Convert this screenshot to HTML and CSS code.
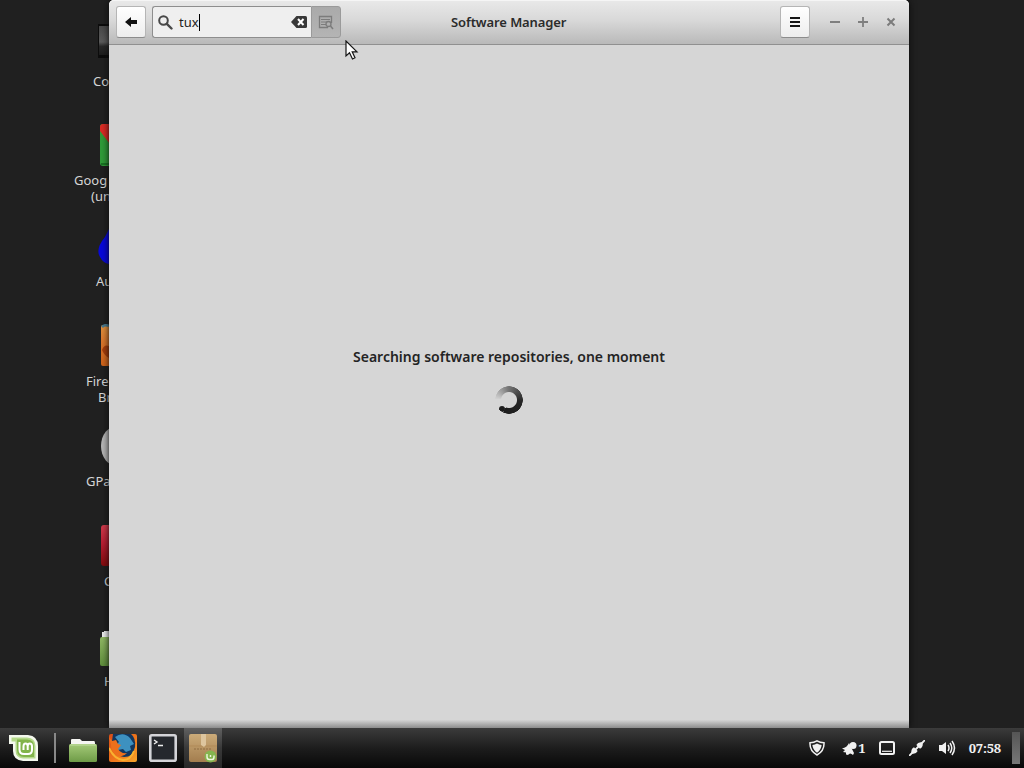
FILE: index.html
```html
<!DOCTYPE html>
<html lang="en">

<head>
  <meta charset="UTF-8">
  <title>Software Manager</title>
  <link rel="stylesheet" href="styles.css">
</head>

<body>
  <div class="desktop">

    <div class="shortcuts">
      <div class="shortcut">
        <svg class="pic" width="11" height="42" viewBox="0 0 11 42"><defs><linearGradient id="gComp" x2="0" y2="1"><stop offset="0" stop-color="#484848"/><stop offset=".55" stop-color="#5b5b5b"/><stop offset=".7" stop-color="#292929"/><stop offset="1" stop-color="#1d1d1d"/></linearGradient></defs><rect x="0" y="0" width="14" height="34" fill="#0c0c0c"/><rect x="1" y="2" width="13" height="29" fill="url(#gComp)"/></svg>
        <span class="computer">Co</span>
      </div>
      <div class="shortcut">
        <svg class="pic chrome" width="9" height="42" viewBox="0 0 9 42"><rect width="20" height="42" rx="3" fill="#2f9a38"/><path d="M0 3Q0 0 3 0H10V20L0 7z" fill="#d92b24"/><path d="M1 40H10" stroke="#187423" stroke-width="2"/></svg>
        <span class="google">Goog</span>
        <span class="unstable">(un</span>
      </div>
      <div class="shortcut">
        <svg class="pic" width="12" height="42" viewBox="0 0 12 42"><path d="M12 5L8 13Q-2 25 3 33Q6 39 12 40z" fill="#0808d8"/></svg>
        <span class="au">Au</span>
      </div>
      <div class="shortcut">
        <svg class="pic" width="8" height="42" viewBox="0 0 8 42"><defs><linearGradient id="gFire" x2="0" y2="1"><stop offset="0" stop-color="#e0913e"/><stop offset=".45" stop-color="#d8742a"/><stop offset="1" stop-color="#ce6219"/></linearGradient></defs><rect y="1" width="18" height="41" rx="2" fill="url(#gFire)"/><path d="M1 3Q4 0 8 2" stroke="#487b91" stroke-width="2.500" fill="none"/><path d="M1 26Q3 20 8 22V34Q3 31 1 26z" fill="#a53e0c"/></svg>
        <span class="fire">Fire</span>
        <span class="browser">Br</span>
      </div>
      <div class="shortcut">
        <svg class="pic" width="8" height="42" viewBox="0 0 8 42"><ellipse cx="16" cy="22" rx="16" ry="20" fill="#b5b5b5"/></svg>
        <span class="gparted">GPa</span>
      </div>
      <div class="shortcut">
        <svg class="pic" width="8" height="42" viewBox="0 0 8 42"><defs><linearGradient id="gRed" x2="0" y2="1"><stop offset="0" stop-color="#d13b4c"/><stop offset=".45" stop-color="#b71d32"/><stop offset="1" stop-color="#820b0d"/></linearGradient></defs><rect y="1" width="18" height="41" rx="3" fill="url(#gRed)"/></svg>
        <span class="letter">C</span>
      </div>
      <div class="shortcut">
        <svg class="pic" width="9" height="42" viewBox="0 0 9 42"><path d="M2 13V8h2V7h5v6z" fill="#ededed"/><defs><linearGradient id="gHome" x2="0" y2="1"><stop offset="0" stop-color="#90b864"/><stop offset="1" stop-color="#5f8d3b"/></linearGradient></defs><rect y="13" width="18" height="29" rx="2" fill="url(#gHome)"/></svg>
        <span class="letter">H</span>
      </div>
    </div>

    <div class="window">
      <div class="header">
        <button class="btn back">
          <svg width="12" height="10" viewBox="0 0 12 10"><path d="M0 5L6 0V3H12V7H6V10z" fill="#111"/></svg>
        </button>
        <div class="search">
          <svg width="15" height="15" viewBox="0 0 15 15"><circle cx="5.500" cy="5.500" r="4.300" fill="none" stroke="#484848" stroke-width="2"/><path d="M8.800 8.800L13.500 13.500" stroke="#484848" stroke-width="2.400" stroke-linecap="round"/></svg>
          <span class="query">tux</span><span class="caret"></span>
          <svg class="clear" width="16" height="12" viewBox="0 0 16 12"><path d="M0 6L5.500 0H14.500Q16 0 16 1.500V10.500Q16 12 14.500 12H5.500z" fill="#383838"/><path d="M7 3L12.500 9M12.500 3L7 9" stroke="#fff" stroke-width="2"/></svg>
        </div>
        <div class="toggle">
          <svg width="16" height="15" viewBox="0 0 16 15"><path d="M10 12.500H1.500V1.500H13.500V8" fill="none" stroke="#7c7c7c" stroke-width="1.300"/><path d="M3 4.500H12M3 7H9M3 9.500H8" stroke="#7c7c7c"/><circle cx="10.500" cy="9" r="2.500" fill="none" stroke="#7c7c7c" stroke-width="1.300"/><path d="M12.500 11L15 14" stroke="#7c7c7c" stroke-width="1.500"/></svg>
        </div>
        <div class="title">Software Manager</div>
        <button class="btn menu">
          <svg width="12" height="10" viewBox="0 0 12 10"><path d="M1 1H11M1 5H11M1 9H11" stroke="#151515" stroke-width="2"/></svg>
        </button>
        <svg class="controls" width="66" height="10" viewBox="0 0 66 10"><path d="M0 5H10M28 5H38M33 0V10" stroke="#7f7f7f" stroke-width="1.800"/><path d="M57.500 1.500L64.500 8.500M64.500 1.500L57.500 8.500" stroke="#7b7b7b" stroke-width="2"/></svg>
      </div>

      <div class="content">
        <p class="message">Searching software repositories, one moment</p>
        <div class="spinner"></div>
      </div>
    </div>

    <svg class="pointer" width="14" height="21" viewBox="0 0 14 21"><path d="M1 1V16L4.500 12.800L7.500 19L10 17.800L7.200 11.800H12z" fill="#fff" stroke="#151515" stroke-width="1.200"/></svg>
  </div>

  <div class="panel">
    <div class="start">
      <svg width="29" height="27" viewBox="0 0 29 27"><path d="M0 0H19Q29 1 29 11V26H14Q4 25 4 16V9H0z" fill="#f4f8ee"/><path d="M2.500 2.500H18Q26.500 3 26.500 11V23.500H14Q6.500 23 6.500 15V6.500H2.500z" fill="#b4d98a"/><path d="M8 4.500H18Q25 4.500 25 11V22H15Q8 22 8 15z" fill="#82b44b"/><path d="M10.500 7V14.500Q10.500 19 15 19H19Q23 19 23 15V11.500Q23 8.500 20.800 8.500Q18.700 8.500 18.700 11.500V15M18.700 11.500Q18.700 8.500 16.600 8.500Q14.500 8.500 14.500 11.500V15" fill="none" stroke="#fff" stroke-width="2"/></svg>
    </div>
    <div class="divider"></div>
    <div class="task">
      <svg class="folder" width="28" height="24" viewBox="0 0 28 24"><defs><linearGradient id="gFolder" x2="0" y2="1"><stop offset="0" stop-color="#a4ca78"/><stop offset="1" stop-color="#6e9b47"/></linearGradient></defs><path d="M2 7V2Q2 1 3 1H11L13 3H25Q26 3 26 5V8z" fill="#f5f5f2"/><rect y="6" width="28" height="18" rx="1.500" fill="url(#gFolder)"/><path d="M1 7H27" stroke="#c1dda1"/></svg>
    </div>
    <div class="task">
      <svg width="28" height="28" viewBox="0 0 28 28"><defs><linearGradient id="gFox" x2="1" y2="1"><stop offset="0" stop-color="#d94c17"/><stop offset=".6" stop-color="#f07a1c"/><stop offset="1" stop-color="#f9a72b"/></linearGradient></defs><rect width="28" height="28" rx="2" fill="url(#gFox)"/><path d="M4 0H22Q27 4 26 13Q24 23 15 23Q8 22 5 16L3 7z" fill="#12375f"/><path d="M6 3Q14-3 21 4L25 10L21 12L22 16L17 18L14 15L9 16L7 11L10 8z" fill="#3d91c0"/><path d="M0 3L3 7L7 6L9 10L12 11L9 15Q12 20 18 19Q13 25 6 20Q2 17 2 11z" fill="#ed701b"/><path d="M0 14Q5 25 14 26Q22 26 25 17" fill="none" stroke="#f9b230" stroke-width="2"/></svg>
    </div>
    <div class="task">
      <svg width="28" height="28" viewBox="0 0 28 28"><rect x="1.300" y="1.300" width="25.400" height="25.400" rx="1.500" fill="#25282d" stroke="#d4d4d8" stroke-width="2.600"/><path d="M5 6L8 8L5 10M9 11.500H14" stroke="#eee" stroke-width="1.400" fill="none"/></svg>
    </div>
    <div class="task active">
      <svg width="28" height="29" viewBox="0 0 28 29"><defs><linearGradient id="gBox" x2="0" y2="1"><stop offset="0" stop-color="#cbab79"/><stop offset="1" stop-color="#a37d4e"/></linearGradient></defs><rect width="28" height="28" rx="2" fill="url(#gBox)"/><path d="M0 12H28" stroke="#b18b59"/><path d="M12 0H17V11L15 13L12 11z" fill="#ddc59e"/><path d="M5 15H22" stroke="#8e6c42" stroke-dasharray="2 1"/><circle cx="21.500" cy="22.500" r="6" fill="#85b54f"/><path d="M18 20V23Q18 25.500 20.500 25.500H23Q25 25.500 25 23V21.500M21.500 23V21" fill="none" stroke="#eff8df" stroke-width="1.400"/></svg>
    </div>

    <div class="tray">
      <svg class="shield" width="16" height="16" viewBox="0 0 16 16"><path d="M8 .8Q11 2.700 15 2.800Q15.500 11 8 15Q.5 11 1 2.800Q5 2.700 8 .8z" fill="none" stroke="#f1f1f1" stroke-width="1.500"/><path d="M8 3.600Q10 5 12.600 5Q12.200 10 8 12.700Q3.800 10 3.400 5Q6 5 8 3.600z" fill="#f1f1f1"/></svg>
      <svg class="bell" width="15" height="15" viewBox="0 0 15 15"><path d="M0 7.500Q5 6.500 7 2L12 12L11 14Q8 11 6 14L4 13.500L4 11.500L1 11L3 9z" fill="#f1f1f1"/><circle cx="11" cy="4.500" r="3.500" fill="#f1f1f1"/></svg>
      <span class="count">1</span>
      <svg class="screen" width="16" height="14" viewBox="0 0 16 14"><rect x="1" y="1" width="14" height="12" rx="1.500" fill="none" stroke="#f1f1f1" stroke-width="2"/><path d="M3 10.300H13" stroke="#f1f1f1" stroke-width="1.200"/></svg>
      <svg class="plug" width="16" height="16" viewBox="0 0 16 16"><path d="M0 16L4 12M12 4L16 0M6 10L10 6" stroke="#f1f1f1" stroke-width="1.800"/><path d="M2.500 13.500Q1.500 9 5 7.300L8.700 11Q7 14.500 2.500 13.500zM7.300 5L11 8.700Q14.500 7 13.500 2.500Q9 1.500 7.300 5z" fill="#f1f1f1"/></svg>
      <svg class="volume" width="17" height="16" viewBox="0 0 17 16"><path d="M0 5H3L7 2V14L3 11H0z" fill="#f1f1f1"/><path d="M9 5Q11 8 9 11M11 3Q14.500 8 11 13M13 1Q18 8 13 15" fill="none" stroke="#f1f1f1" stroke-width="1.500"/></svg>
      <span class="clock">07:58</span>
      <div class="show-desktop"></div>
    </div>
  </div>
</body>

</html>
```
FILE: styles.css
```css
body {
  margin: 0;
  width: 1024px;
  height: 768px;
  overflow: hidden;
  display: flex;
  flex-direction: column;
  background-color: #202020;
  font-family: "Noto Sans", sans-serif;
}

.desktop {
  position: relative;
  display: flex;
  height: 728px;
}

.shortcuts {
  width: 109px;
  padding-top: 24px;
  box-sizing: border-box;
}

.shortcut {
  height: 100px;
  display: flex;
  flex-direction: column;
  color: #d5d5d5;
  font-size: 13px;
  line-height: 16px;
  white-space: nowrap;
}

.pic {
  margin: 0 0 7px auto;
  flex-shrink: 0;
}

.chrome {
  margin-bottom: 6px;
}

.computer { padding-left: 93px; }
.google { padding-left: 74px; }
.unstable { padding-left: 91px; }
.au { padding-left: 96px; }
.fire { padding-left: 86px; }
.browser { padding-left: 98px; }
.gparted { padding-left: 86px; }
.letter { padding-left: 104px; }

/* window sits over the desktop labels */
.window {
  position: relative;
  width: 800px;
  display: flex;
  flex-direction: column;
  background-color: #d6d6d6;
  border-radius: 5px 5px 0 0;
  box-shadow: 0 0 7px #090909;
}

.header {
  height: 45px;
  box-sizing: border-box;
  padding-left: 7px;
  display: flex;
  align-items: center;
  background: linear-gradient(#e9e9e9, #d9d9d9 45%, #b9b9b9);
  border-bottom: 1px solid #909090;
  border-radius: 5px 5px 0 0;
  box-shadow: inset 0 1px #f5f5f5;
}

.btn {
  width: 30px;
  height: 32px;
  padding: 0;
  display: flex;
  align-items: center;
  justify-content: center;
  background: linear-gradient(#fff, #ededed);
  border: 1px solid #b5b5b5;
  border-bottom-color: #8c8c8c;
  border-radius: 3px;
}

.search {
  width: 159px;
  height: 32px;
  margin-left: 6px;
  padding: 0 4px 0 5px;
  box-sizing: border-box;
  display: flex;
  align-items: center;
  background-color: #efefef;
  border: 1px solid #8e8e8e;
  border-right: 0;
  border-radius: 3px 0 0 3px;
}

.query {
  margin-left: 6px;
  color: #222;
  font-size: 13px;
}

.caret {
  width: 1px;
  height: 17px;
  background-color: #000;
}

.clear {
  margin-left: auto;
}

.toggle {
  width: 30px;
  height: 32px;
  box-sizing: border-box;
  display: flex;
  align-items: center;
  justify-content: center;
  background: linear-gradient(#aaa, #b4b4b4);
  border: 1px solid #9a9a9a;
  border-radius: 0 3px 3px 0;
}

.title {
  width: 116px;
  margin-left: 110px;
  color: #2b2b2b;
  font-size: 13px;
  font-weight: 600;
  letter-spacing: -0.1px;
  white-space: nowrap;
}

.menu {
  margin-left: 213px;
}

.controls {
  margin-left: 20px;
}

.content {
  flex: 1;
  display: flex;
  flex-direction: column;
  align-items: center;
  background: linear-gradient(transparent 98.8%, #8c8c8c);
}

.message {
  margin: 302px 0 0;
  color: #242424;
  font-size: 14px;
  font-weight: 600;
  line-height: 20px;
}

.spinner {
  position: relative;
  width: 28px;
  height: 28px;
  margin-top: 19px;
  background: conic-gradient(from 275deg, #d2d2d2, #777 80deg, #262626 180deg, #1d1d1d 290deg, transparent 290deg);
  -webkit-mask: radial-gradient(circle closest-side, transparent 7.500px, #000 8.500px 13.500px, transparent 14px);
  mask: radial-gradient(circle closest-side, transparent 7.500px, #000 8.500px 13.500px, transparent 14px);
}

/* rounded head of the arc */
.spinner::after {
  content: "";
  position: absolute;
  left: 4px;
  top: 20px;
  width: 6px;
  height: 6px;
  border-radius: 50%;
  background-color: #1d1d1d;
}

.pointer {
  position: absolute;
  left: 345px;
  top: 40px;
}

.panel {
  position: relative;
  height: 40px;
  display: flex;
  align-items: center;
  background: linear-gradient(#3b3b3b, #1d1d1d 50%, #080808);
  color: #f1f1f1;
}

.start {
  width: 54px;
  padding-left: 9px;
  box-sizing: border-box;
}

.start svg,
.task svg {
  display: block;
}

.folder {
  margin-top: 3px;
}

.divider {
  width: 2px;
  height: 30px;
  margin-right: 8px;
  background-color: #888;
}

.task {
  width: 38px;
  height: 40px;
  margin-right: 2px;
  display: flex;
  align-items: center;
  justify-content: center;
}

.active {
  background: linear-gradient(#606060, #393939 50%, #282828);
}

.tray {
  margin-left: auto;
  display: flex;
  align-items: center;
}

.bell { margin-left: 17px; }
.count { margin-left: 1px; }
.screen { margin-left: 13px; }
.plug { margin-left: 14px; }
.volume { margin-left: 14px; }

.count,
.clock {
  font-family: "Noto Serif", "Liberation Serif", serif;
  font-size: 13px;
  font-weight: bold;
}

.clock {
  margin-left: 13px;
  letter-spacing: -0.2px;
}

.show-desktop {
  width: 8px;
  height: 32px;
  margin: 0 4px 0 11px;
  background: linear-gradient(#555, #777);
}
```
